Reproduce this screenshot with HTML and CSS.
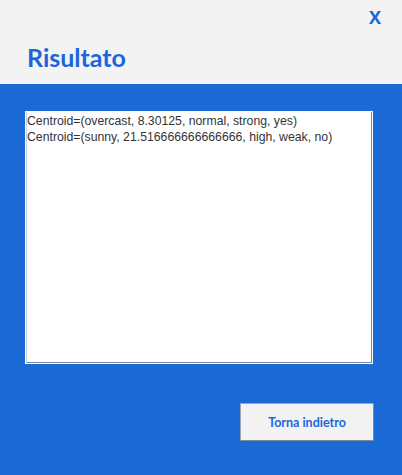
FILE: index.html
```html
<!DOCTYPE html>
<html>
<head>
<meta charset="utf-8">
<link rel="stylesheet" href="styles.css">
</head>
<body>
<div class="window">
  <header class="head">
    <div class="close-row"><span class="close">X</span></div>
    <h1 class="title">Risultato</h1>
  </header>
  <main class="body">
    <div class="area">
      <div class="area-inner">Centroid=(overcast, 8.30125, normal, strong, yes)
Centroid=(sunny, 21.516666666666666, high, weak, no)</div>
    </div>
    <div class="actions">
      <button class="btn">Torna indietro</button>
    </div>
  </main>
</div>
</body>
</html>
```

FILE: styles.css
```css
html, body {
  margin: 0;
  padding: 0;
}
body {
  width: 402px;
  height: 475px;
  overflow: hidden;
  font-family: "Open Sans", "Liberation Sans", sans-serif;
}
.window {
  display: flex;
  flex-direction: column;
  height: 475px;
}
.head {
  background: #f3f3f3;
  height: 84px;
  box-sizing: border-box;
  padding: 0 21px 0 27px;
  display: flex;
  flex-direction: column;
}
.close-row {
  display: flex;
  justify-content: flex-end;
  height: 36px;
  padding-top: 5px;
  box-sizing: border-box;
}
.close {
  color: #1b66dc;
  font-weight: 700;
  font-size: 18px;
  line-height: 25px;
}
.title {
  margin: 5px 0 0 0;
  color: #1b66dc;
  font-family: Lato, "Open Sans", sans-serif;
  font-weight: 700;
  font-size: 25px;
  line-height: 32px;
}
.body {
  flex: 1;
  background: #1b69d4;
  display: flex;
  flex-direction: column;
  padding: 27px 29px 0 25px;
}
.area {
  width: 348px;
  height: 253px;
  box-sizing: border-box;
  border: 1px solid #ffffff;
  background: #ffffff;
}
.area-inner {
  height: 100%;
  box-sizing: border-box;
  border-right: 1px solid #7d8a96;
  border-bottom: 1px solid #7d8a96;
  border-left: 1px solid #c9ced3;
  padding: 1px 0 0 0;
  white-space: pre;
  font-family: "Liberation Sans", Arial, sans-serif;
  font-size: 12.25px;
  line-height: 16px;
  color: #333333;
}
.actions {
  display: flex;
  justify-content: flex-end;
  margin-top: 39px;
}
.btn {
  width: 134px;
  height: 38px;
  box-sizing: border-box;
  background: #f2f2f2;
  border: 1px solid #7d8a96;
  border-top-color: #9aa6b2;
  border-left-color: #9aa6b2;
  color: #1b66dc;
  font-family: Lato, "Open Sans", sans-serif;
  font-weight: 700;
  font-size: 12.5px;
  padding: 0;
  margin-right: -1px;
}
```
